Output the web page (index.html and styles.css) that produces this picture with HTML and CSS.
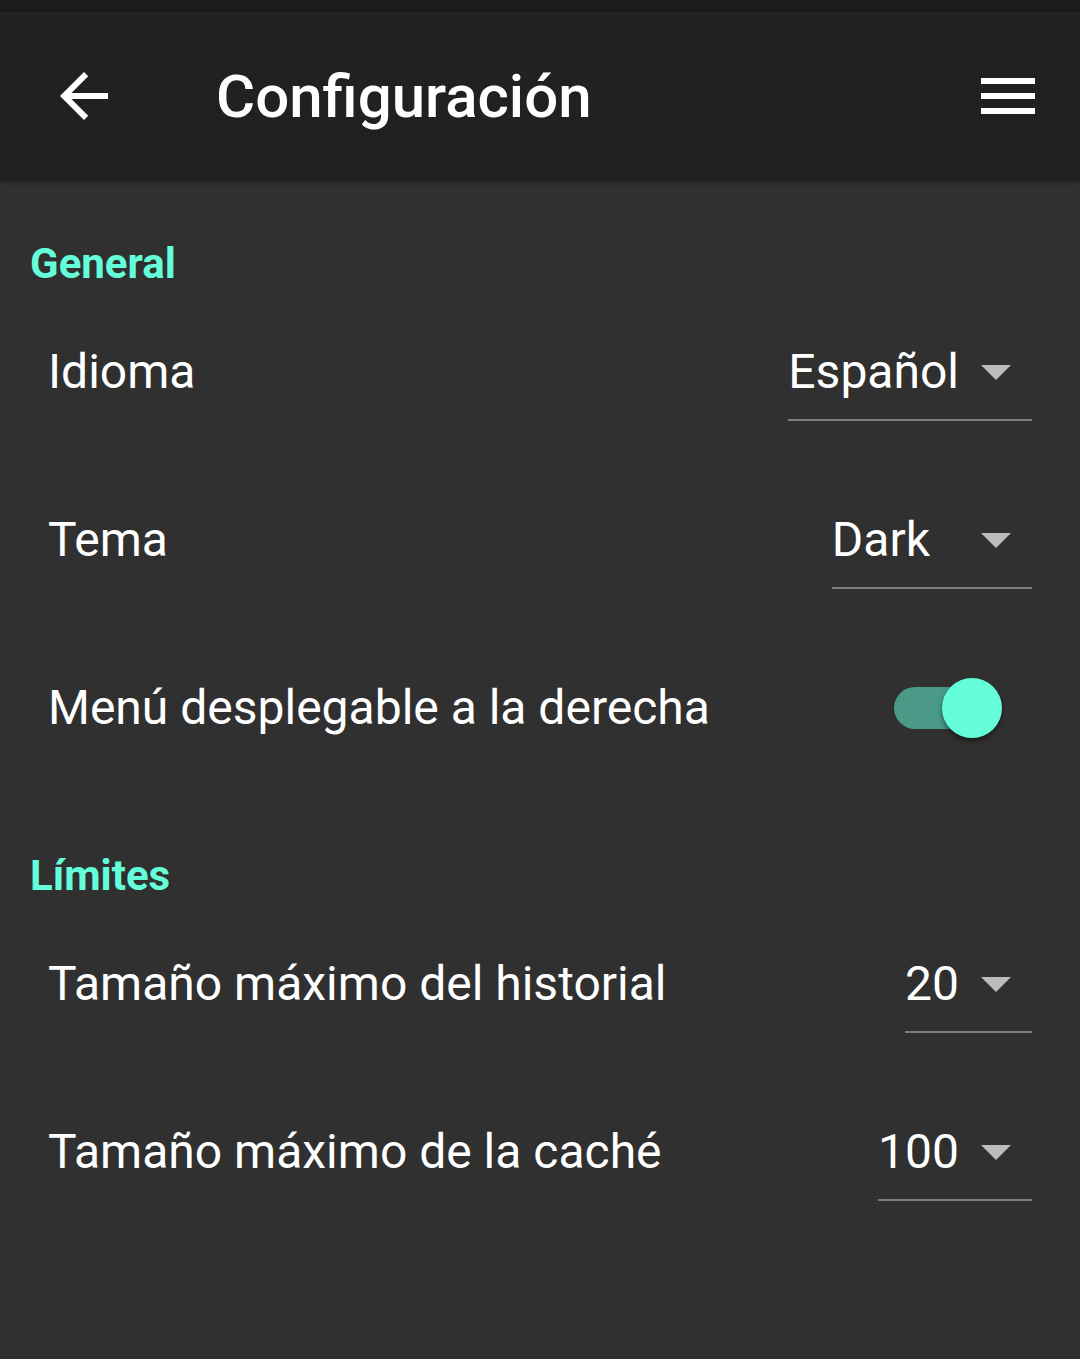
FILE: index.html
```html
<!DOCTYPE html>
<html lang="es">
<head>
<meta charset="utf-8">
<title>Configuración</title>
<link rel="stylesheet" href="styles.css">
</head>
<body>
<div class="status"></div>
<header class="toolbar">
  <svg class="tb-icon" viewBox="0 0 24 24" aria-label="Atrás"><path d="M20 11H7.83l5.59-5.59L12 4l-8 8 8 8 1.41-1.41L7.83 13H20v-2z"/></svg>
  <h1 class="title">Configuración</h1>
  <svg class="tb-icon" viewBox="0 0 24 24" aria-label="Menú"><path d="M3 18h18v-2H3v2zm0-5h18v-2H3v2zm0-7v2h18V6H3z"/></svg>
</header>
<main class="prefs">
  <div class="category">General</div>
  <div class="row">
    <span class="label">Idioma</span>
    <div class="select"><span class="value">Español</span><svg class="caret" viewBox="7 10 10 5"><path d="M7 10l5 5 5-5z"/></svg></div>
  </div>
  <div class="row">
    <span class="label">Tema</span>
    <div class="select"><span class="value">Dark</span><svg class="caret caret-wide" viewBox="7 10 10 5"><path d="M7 10l5 5 5-5z"/></svg></div>
  </div>
  <div class="row">
    <span class="label">Menú desplegable a la derecha</span>
    <div class="switch"><span class="track"></span><span class="thumb"></span></div>
  </div>
  <div class="category">Límites</div>
  <div class="row">
    <span class="label">Tamaño máximo del historial</span>
    <div class="select"><span class="value">20</span><svg class="caret" viewBox="7 10 10 5"><path d="M7 10l5 5 5-5z"/></svg></div>
  </div>
  <div class="row">
    <span class="label">Tamaño máximo de la caché</span>
    <div class="select"><span class="value">100</span><svg class="caret" viewBox="7 10 10 5"><path d="M7 10l5 5 5-5z"/></svg></div>
  </div>
</main>
</body>
</html>
```
FILE: styles.css
```css
html, body {
  margin: 0;
  padding: 0;
  height: 1359px;
  background: #303030;
  font-family: Roboto, "Noto Sans", sans-serif;
  color: #ffffff;
  overflow: hidden;
}

.status {
  height: 12px;
  background: #1b1b1b;
}

.toolbar {
  position: relative;
  z-index: 1;
  height: 168px;
  display: flex;
  align-items: center;
  padding: 0 36px 0 48px;
  background: #212121;
  box-shadow: 0 2px 5px rgba(0, 0, 0, 0.35);
}

.tb-icon {
  width: 72px;
  height: 72px;
  fill: #ffffff;
  flex: none;
}

.title {
  flex: 1;
  margin: 2px 0 0 96px;
  font-size: 60px;
  font-weight: 500;
  line-height: 72px;
  color: #ffffff;
}

.prefs {
  display: flex;
  flex-direction: column;
}

.category {
  height: 48px;
  padding: 60px 0 0 30px;
  font-size: 42px;
  font-weight: 700;
  line-height: 48px;
  color: #64ffda;
}

.row {
  height: 168px;
  display: flex;
  align-items: center;
  justify-content: space-between;
  padding: 0 48px;
}

.label {
  font-size: 48px;
  line-height: 56px;
  color: #ffffff;
}

.select {
  display: flex;
  align-items: center;
  margin-top: 21px;
  padding: 0 21px 19px 0;
  border-bottom: 2px solid #7e7e7e;
}

.value {
  font-size: 48px;
  line-height: 56px;
  color: #ffffff;
}

.caret {
  width: 30px;
  height: 15px;
  margin-left: 22px;
  fill: #bdbdbd;
}

.caret-wide {
  margin-left: 51px;
}

.switch {
  position: relative;
  width: 108px;
  height: 60px;
  margin-right: 30px;
}

.track {
  position: absolute;
  left: 0;
  top: 9px;
  width: 96px;
  height: 42px;
  border-radius: 21px;
  background: #4a9a87;
}

.thumb {
  position: absolute;
  right: 0;
  top: 0;
  width: 60px;
  height: 60px;
  border-radius: 50%;
  background: #64ffda;
  box-shadow: 0 3px 5px rgba(0, 0, 0, 0.45);
}
```
